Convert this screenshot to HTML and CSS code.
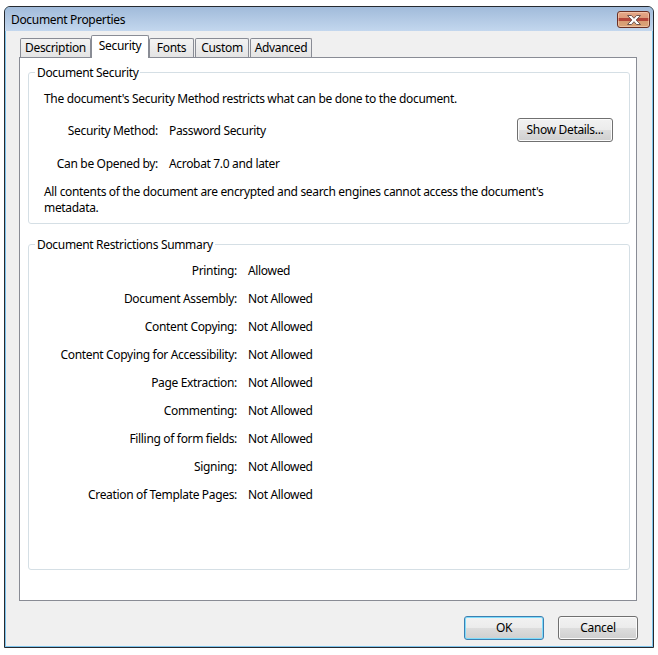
FILE: index.html
```html
<!DOCTYPE html>
<html lang="en">
<head>
<meta charset="utf-8">
<title>Document Properties</title>
<link rel="stylesheet" href="styles.css">
</head>
<body>
<div class="window">
  <div class="titlebar">
    <span class="title">Document Properties</span>
    <button class="close" aria-label="Close">
      <svg width="14" height="10" viewBox="0 0 14 10"><polygon points="0.5,0.5 4.5,0.5 7,3.3 9.5,0.5 13.5,0.5 9.2,5 13.5,9.5 9.5,9.5 7,6.7 4.5,9.5 0.5,9.5 4.8,5" fill="#fff" stroke="#6e5550" stroke-width="1" stroke-linejoin="round"/></svg>
    </button>
  </div>
  <div class="client">
    <div class="tabs">
      <div class="tab tab-description">Description</div>
      <div class="tab tab-security active">Security</div>
      <div class="tab tab-fonts">Fonts</div>
      <div class="tab tab-custom">Custom</div>
      <div class="tab tab-advanced">Advanced</div>
    </div>
    <div class="panel">
      <fieldset class="group group-security">
        <legend>Document Security</legend>
        <p class="text">The document's Security Method restricts what can be done to the document.</p>
        <div class="kv kv-method">
          <span class="k">Security Method:</span>
          <span class="v">Password Security</span>
          <button class="btn btn-details">Show Details...</button>
        </div>
        <div class="kv kv-opened">
          <span class="k">Can be Opened by:</span>
          <span class="v">Acrobat 7.0 and later</span>
        </div>
        <p class="text note">All contents of the document are encrypted and search engines cannot access the document's<br>metadata.</p>
      </fieldset>
      <fieldset class="group group-restrictions">
        <legend>Document Restrictions Summary</legend>
        <dl class="summary">
          <dt>Printing:</dt><dd>Allowed</dd>
          <dt>Document Assembly:</dt><dd>Not Allowed</dd>
          <dt>Content Copying:</dt><dd>Not Allowed</dd>
          <dt>Content Copying for Accessibility:</dt><dd>Not Allowed</dd>
          <dt>Page Extraction:</dt><dd>Not Allowed</dd>
          <dt>Commenting:</dt><dd>Not Allowed</dd>
          <dt>Filling of form fields:</dt><dd>Not Allowed</dd>
          <dt>Signing:</dt><dd>Not Allowed</dd>
          <dt>Creation of Template Pages:</dt><dd>Not Allowed</dd>
        </dl>
      </fieldset>
    </div>
    <div class="footer">
      <button class="btn btn-dialog btn-default">OK</button>
      <button class="btn btn-dialog">Cancel</button>
    </div>
  </div>
</div>
</body>
</html>
```
FILE: styles.css
```css
* { box-sizing: border-box; }

html, body {
  margin: 0;
  padding: 0;
  background: #ffffff;
}

body {
  font-family: "Noto Sans", "Open Sans", sans-serif;
  font-size: 12px;
  line-height: 16px;
  color: #000;
  letter-spacing: -0.33px;
}

.window {
  margin: 6px 0 0 4px;
  width: 650px;
  height: 642px;
  border: 1px solid #262a30;
  border-radius: 6px 6px 0 0;
  background: #7fc4ec;
  display: flex;
  flex-direction: column;
  overflow: hidden;
}

.titlebar {
  flex: none;
  height: 24px;
  background: linear-gradient(#a1bbda, #c3d7ee);
  display: flex;
  align-items: flex-start;
  justify-content: space-between;
  padding: 0 3px 0 6px;
}

.title {
  line-height: 16px;
  padding-top: 5px;
}

.close {
  margin: 4px 0 0 0;
  padding: 0;
  width: 33px;
  height: 17px;
  border: 1px solid #6a3024;
  border-radius: 3px;
  background: linear-gradient(#e6a988 0%, #dc9a7a 40%, #b3463a 40%, #b3463a 62%, #d89c72 62%, #dba479 100%);
  box-shadow: inset 0 0 0 1px rgba(255, 220, 200, 0.5);
  display: flex;
  align-items: center;
  justify-content: center;
}

.close svg { display: block; }

.client {
  flex: 1;
  margin: 0 1px 1px 1px;
  background: #f0f0f0;
  display: flex;
  flex-direction: column;
  padding: 4px 15px 0 13px;
}

.tabs {
  flex: none;
  display: flex;
  align-items: flex-end;
  padding-left: 1px;
  height: 22px;
}

.tab {
  height: 19px;
  border: 1px solid #898c95;
  border-bottom: none;
  background: linear-gradient(#f3f3f3, #e4e4e4);
  text-align: center;
  line-height: 17px;
  border-radius: 2px 2px 0 0;
}

.tab.active {
  position: relative;
  z-index: 1;
  height: 23px;
  margin-bottom: -1px;
  background: #fff;
  line-height: 19px;
}

.tab-description { width: 71px; }
.tab-security { width: 58px; }
.tab-fonts { width: 45px; }
.tab-custom { width: 54px; margin-left: 1px; }
.tab-advanced { width: 62px; margin-left: 1px; }

.panel {
  flex: 1;
  border: 1px solid #898c95;
  background: #fff;
  display: flex;
  flex-direction: column;
  padding: 6px 6px 30px 8px;
}

.group {
  margin: 0;
  border: 1px solid #d5dfe5;
  border-radius: 3px;
  padding: 10px 16px 7px 15px;
  min-width: 0;
}

.group legend {
  padding: 1px 2px 0 2px;
  margin-left: -9px;
  line-height: 15px;
}

.group-restrictions {
  flex: 1;
  margin-top: 12px;
}

.text {
  margin: 0;
  padding-top: 1px;
}

.kv {
  display: flex;
  align-items: center;
}

.kv .k {
  width: 114px;
  text-align: right;
  flex: none;
}

.kv .v {
  margin-left: 11px;
  flex: 1;
}

.kv-method {
  margin-top: 11px;
  height: 24px;
  padding-top: 2px;
}

.kv-opened {
  margin-top: 13px;
  height: 17px;
  padding-top: 1px;
}

.note { margin-top: 11px; }

.btn {
  font: inherit;
  letter-spacing: inherit;
  color: #000;
  border: 1px solid #707070;
  border-radius: 3px;
  background: linear-gradient(#f2f2f2 0%, #ebebeb 50%, #dddddd 50%, #cfcfcf 100%);
  box-shadow: inset 0 0 0 1px #fbfbfb;
  padding: 0;
  height: 24px;
  line-height: 20px;
  text-align: center;
}

.btn-details {
  width: 96px;
  flex: none;
  margin-top: -2px;
}

.summary {
  margin: 0;
  display: grid;
  grid-template-columns: 193px auto;
  column-gap: 11px;
  row-gap: 11px;
}

.summary dt,
.summary dd {
  padding-top: 1px;
}

.summary dt {
  text-align: right;
}

.summary dd {
  margin: 0;
}

.footer {
  flex: none;
  height: 45px;
  display: flex;
  justify-content: flex-end;
  gap: 14px;
  padding: 15px 0 6px 0;
  margin-right: -1px;
}

.btn-dialog {
  width: 80px;
}

.btn-default {
  border-color: #3c7fb1;
  box-shadow: inset 0 0 0 1px #7fdcfb;
}
```
